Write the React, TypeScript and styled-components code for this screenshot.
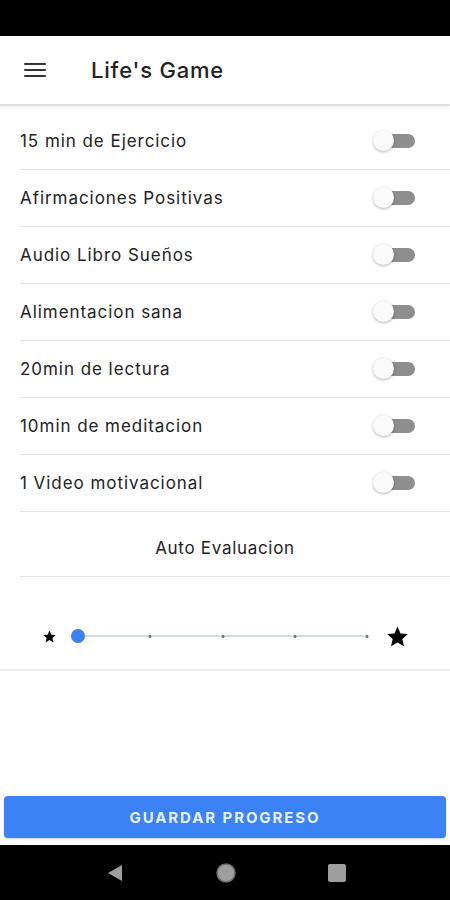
import React, { useState } from "react";
import styled, { createGlobalStyle } from "styled-components";

const GlobalStyle = createGlobalStyle`
    body {
        margin: 0;
        background: #ffffff;
        font-family: Inter, Roboto, "Liberation Sans", sans-serif;
    }
`;

const Screen = styled.div`
    width: 450px;
    height: 900px;
    display: flex;
    flex-direction: column;
    background: #ffffff;
    overflow: hidden;
`;

const StatusBar = styled.div`
    height: 36px;
    background: #000000;
`;

const Header = styled.header`
    height: 68px;
    display: flex;
    align-items: center;
    padding-left: 24px;
    border-bottom: 2px solid #e2e2e2;
    box-shadow: 0 1px 3px rgba(0, 0, 0, 0.08);
`;

const MenuButton = styled.div`
    width: 22px;
    display: flex;
    flex-direction: column;
    gap: 4px;
    margin-right: 45px;

    span {
        height: 2px;
        background: #333333;
        border-radius: 1px;
    }
`;

const Title = styled.h1`
    margin: 0;
    font-size: 22px;
    font-weight: 500;
    letter-spacing: 0.8px;
    color: #222222;
`;

const List = styled.div`
    padding-top: 7px;
    display: flex;
    flex-direction: column;
`;

const Row = styled.div`
    height: 56px;
    margin-left: 20px;
    padding-right: 35px;
    display: flex;
    align-items: center;
    justify-content: space-between;
    border-bottom: 1px solid #e6e6e6;
`;

const Label = styled.span`
    font-size: 17px;
    letter-spacing: 0.95px;
    color: #222222;
`;

const SwitchTrack = styled.div<{ $on: boolean }>`
    position: relative;
    width: 38px;
    height: 14px;
    border-radius: 7px;
    background: ${(p) => (p.$on ? "#90b8f8" : "#8e8e8e")};
    cursor: pointer;
`;

const SwitchThumb = styled.div<{ $on: boolean }>`
    position: absolute;
    top: -4px;
    left: ${(p) => (p.$on ? "18px" : "-4px")};
    width: 21px;
    height: 21px;
    border-radius: 50%;
    background: ${(p) => (p.$on ? "#3b82f6" : "#fafafa")};
    box-shadow: 0 1px 3px rgba(0, 0, 0, 0.3);
`;

const SectionTitle = styled.div`
    height: 65px;
    box-sizing: border-box;
    padding: 7px 20px 0 0;
    margin-left: 20px;
    display: flex;
    align-items: center;
    justify-content: center;
    font-size: 17px;
    letter-spacing: 0.7px;
    color: #222222;
    border-bottom: 1px solid #e6e6e6;
`;

const SliderSection = styled.div`
    height: 94px;
    padding: 26px 40px 0 42px;
    display: flex;
    align-items: center;
    border-bottom: 2px solid #ececec;
    box-sizing: border-box;
`;

const SliderTrack = styled.div`
    position: relative;
    flex: 1;
    height: 2px;
    margin: 0 18px 0 21px;
    background: #d6dbe3;
`;

const Tick = styled.div`
    position: absolute;
    top: -0.5px;
    width: 3px;
    height: 3px;
    border-radius: 50%;
    background: #6b7280;
    transform: translateX(-50%);
`;

const SliderThumb = styled.div`
    position: absolute;
    top: -6px;
    width: 14px;
    height: 14px;
    border-radius: 50%;
    background: #3b82f6;
    transform: translateX(-50%);
`;

const Spacer = styled.div`
    flex: 1;
`;

const SaveButton = styled.button`
    margin: 0 4px 7px;
    height: 42px;
    border: none;
    border-radius: 4px;
    background: #3b82f6;
    color: #e6f1ff;
    font-family: Inter, Roboto, "Liberation Sans", sans-serif;
    font-size: 15px;
    font-weight: 700;
    letter-spacing: 1.9px;
    box-shadow: 0 1px 2px rgba(0, 0, 0, 0.2);
`;

const NavBar = styled.nav`
    height: 55px;
    background: #000000;
    display: flex;
    align-items: center;
    justify-content: center;
    gap: 90px;
    padding-left: 2px;
`;

const Star = ({ size }: { size: number }) => (
    <svg width={size} height={size} viewBox="0 0 24 24">
        <path d="M12 2.5l2.9 6.6 7.1.6-5.4 4.7 1.6 7-6.2-3.7-6.2 3.7 1.6-7L2 9.7l7.1-.6z" fill="#000" />
    </svg>
);

const tasks = [
    "15 min de Ejercicio",
    "Afirmaciones Positivas",
    "Audio Libro Sueños",
    "Alimentacion sana",
    "20min de lectura",
    "10min de meditacion",
    "1 Video motivacional",
];

const App = () => {
    const [done, setDone] = useState<boolean[]>(tasks.map(() => false));
    const [rating] = useState(0);

    const toggle = (i: number) => {
        setDone(done.map((d, j) => (j === i ? !d : d)));
    };

    return (
        <Screen>
            <GlobalStyle />
            <StatusBar />
            <Header>
                <MenuButton>
                    <span />
                    <span />
                    <span />
                </MenuButton>
                <Title>Life's Game</Title>
            </Header>
            <List>
                {tasks.map((t, i) => (
                    <Row key={t}>
                        <Label>{t}</Label>
                        <SwitchTrack $on={done[i]} onClick={() => toggle(i)}>
                            <SwitchThumb $on={done[i]} />
                        </SwitchTrack>
                    </Row>
                ))}
                <SectionTitle>Auto Evaluacion</SectionTitle>
                <SliderSection>
                    <Star size={15} />
                    <SliderTrack>
                        {[25, 50, 75, 100].map((p) => (
                            <Tick key={p} style={{ left: `${p}%` }} />
                        ))}
                        <SliderThumb style={{ left: `${rating * 25}%` }} />
                    </SliderTrack>
                    <Star size={25} />
                </SliderSection>
            </List>
            <Spacer />
            <SaveButton>GUARDAR PROGRESO</SaveButton>
            <NavBar>
                <svg width="20" height="20" viewBox="0 0 20 20">
                    <path d="M17 2v16L3 10z" fill="#9e9e9e" />
                </svg>
                <svg width="22" height="22" viewBox="0 0 22 22">
                    <circle cx="11" cy="11" r="9" fill="#9e9e9e" stroke="#6b6b6b" strokeWidth="1.5" />
                </svg>
                <svg width="20" height="20" viewBox="0 0 20 20">
                    <rect x="1" y="1" width="18" height="18" rx="2" fill="#9e9e9e" />
                </svg>
            </NavBar>
        </Screen>
    );
};

export default App;
